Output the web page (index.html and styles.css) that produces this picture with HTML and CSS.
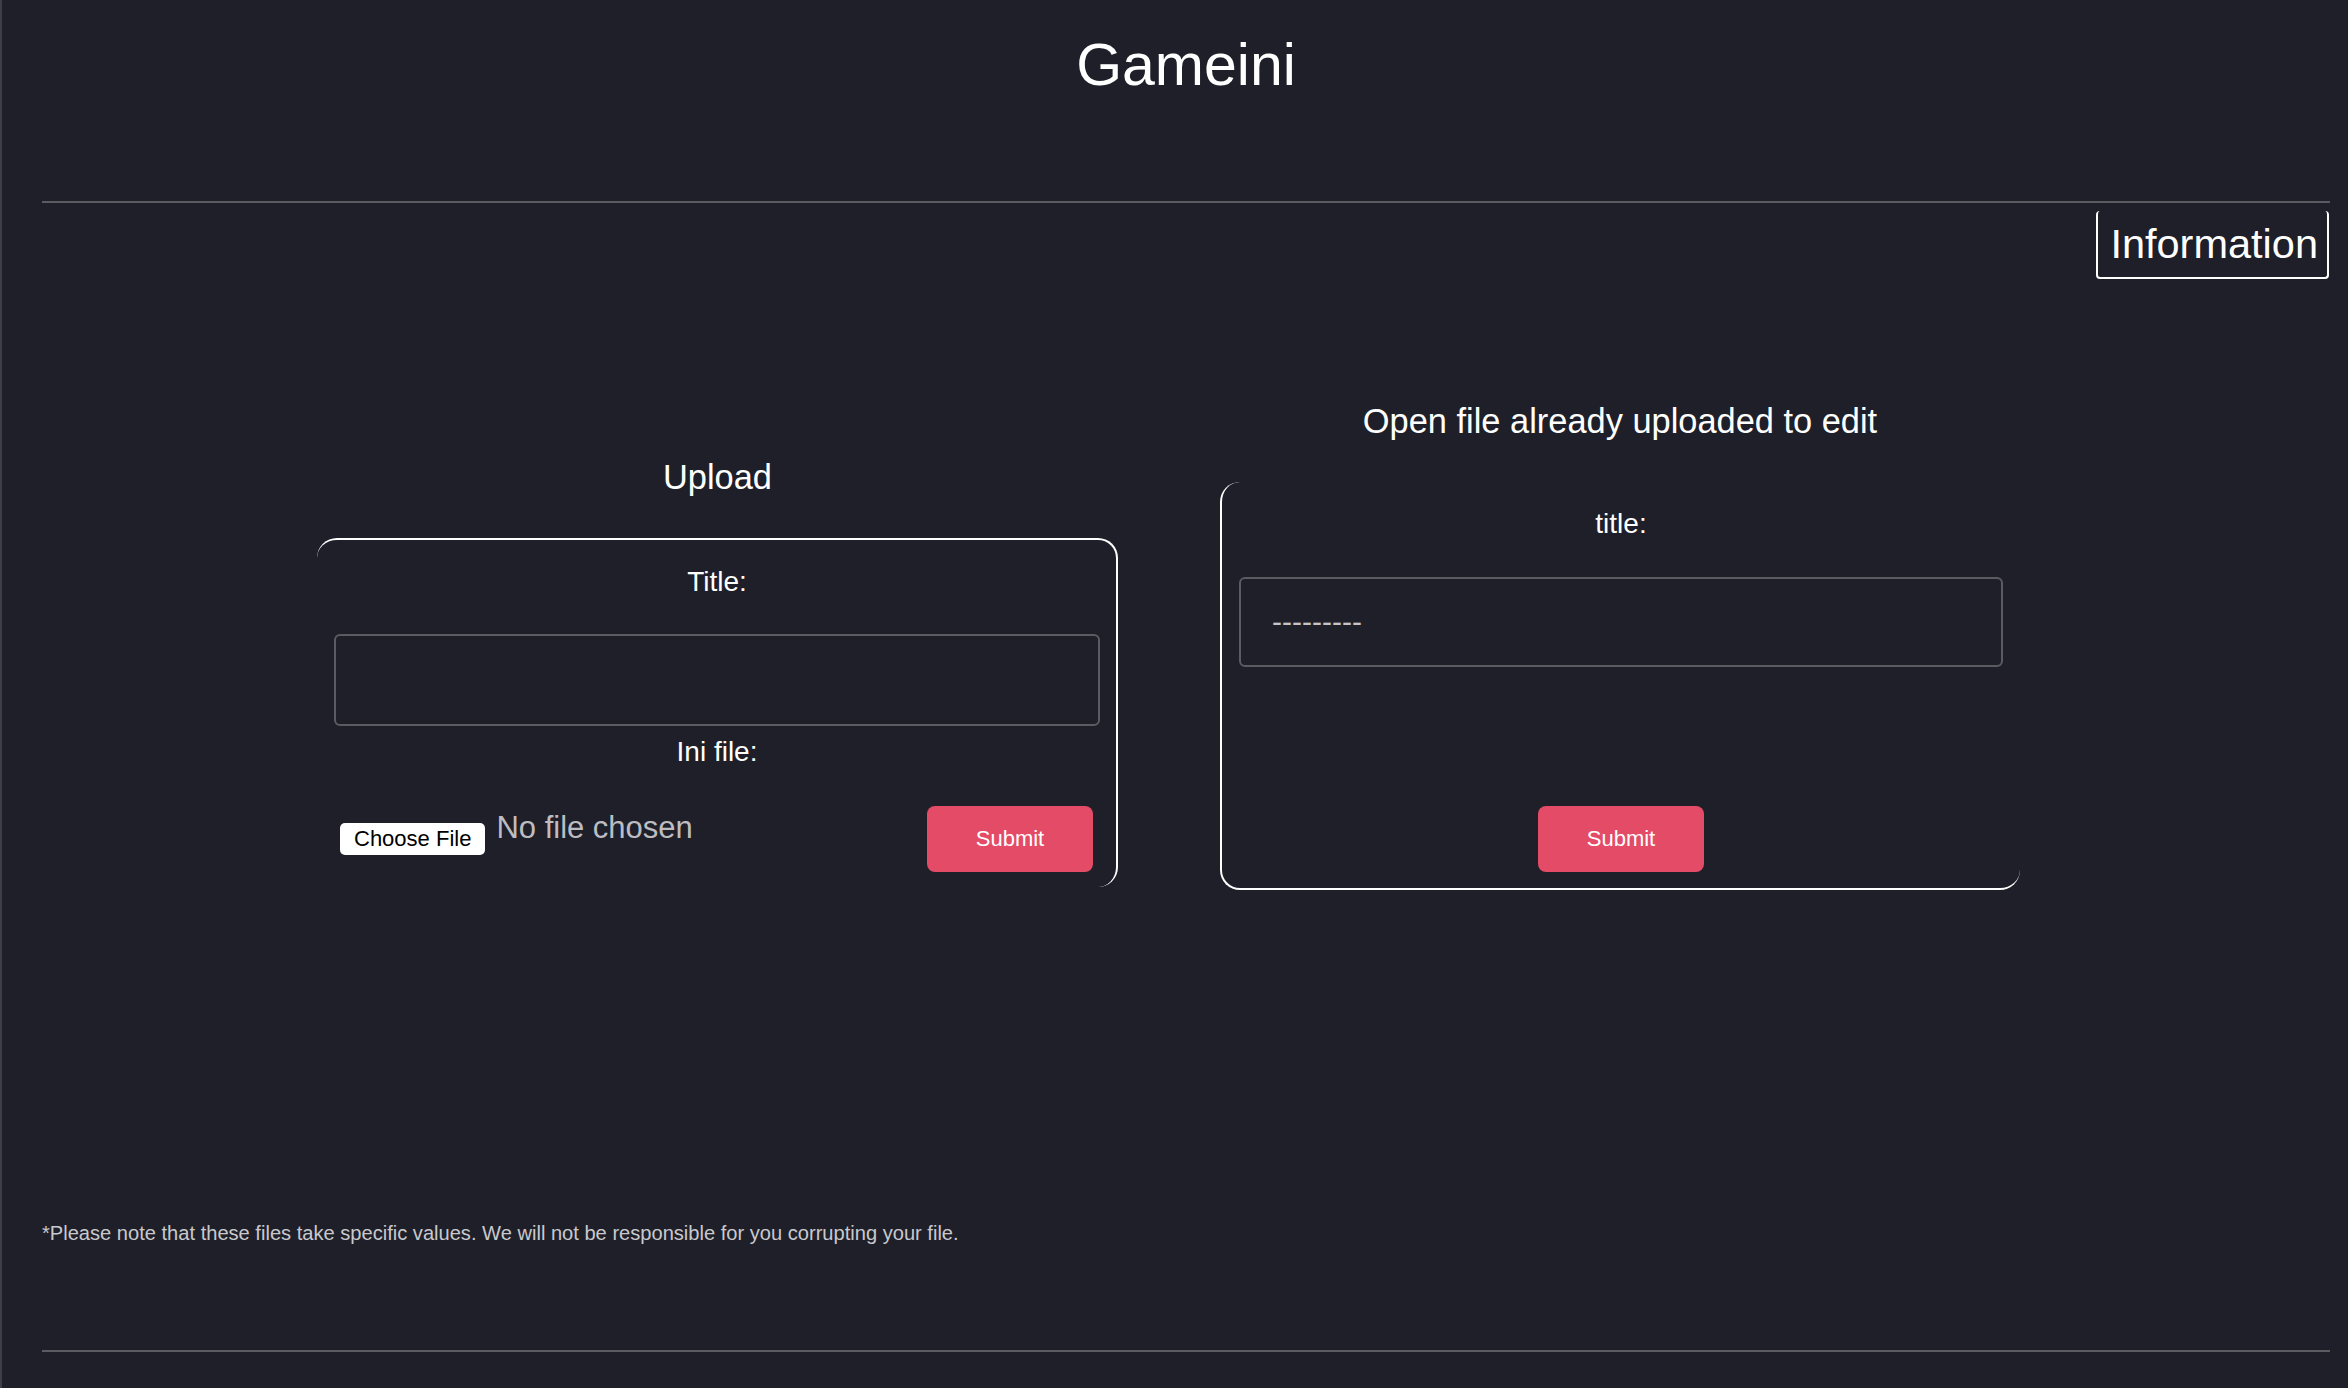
FILE: index.html
```html
<!DOCTYPE html>
<html lang="en">
<head>
<meta charset="utf-8">
<title>Gameini</title>
<link rel="stylesheet" href="styles.css">
</head>
<body>
  <header class="site-header">
    <h1 class="site-title">Gameini</h1>
  </header>
  <hr class="rule">
  <div class="toolbar">
    <button class="info-btn" type="button">Information</button>
  </div>
  <main class="panels">
    <section class="panel panel-upload">
      <h2 class="panel-title">Upload</h2>
      <form class="card card-upload">
        <label class="field-label" for="title">Title:</label>
        <input class="text-input" id="title" type="text">
        <label class="field-label label-ini">Ini file:</label>
        <div class="file-row">
          <div class="file-group">
            <label class="file-btn">Choose File<input class="file-hidden" type="file"></label>
            <span class="file-name">No file chosen</span>
          </div>
          <button class="submit-btn" type="submit">Submit</button>
        </div>
      </form>
    </section>
    <section class="panel panel-open">
      <h2 class="panel-title">Open file already uploaded to edit</h2>
      <form class="card card-open">
        <label class="field-label" for="open-title">title:</label>
        <input class="text-input input-open" id="open-title" type="text" placeholder="---------">
        <button class="submit-btn submit-center" type="submit">Submit</button>
      </form>
    </section>
  </main>
  <p class="note">*Please note that these files take specific values. We will not be responsible for you corrupting your file.</p>
  <hr class="rule rule-bottom">
</body>
</html>
```

FILE: styles.css
```css
html, body {
  margin: 0;
}

body {
  background: #1e1f29;
  color: #ffffff;
  font-family: "Liberation Sans", Arial, Helvetica, sans-serif;
  border-left: 2px solid #3e3e47;
  padding: 0 18px 0 40px;
  min-height: 1388px;
  box-sizing: border-box;
}

.site-title {
  margin: 30px 0 0;
  font-size: 59px;
  line-height: 70px;
  font-weight: 400;
  text-align: center;
}

.rule {
  border: 0;
  height: 2px;
  background: #5b5b62;
  margin: 101px 0 0;
}

.toolbar {
  display: flex;
  justify-content: flex-end;
  margin-top: 8px;
}

.info-btn {
  background: none;
  color: #ffffff;
  font-family: inherit;
  font-size: 41.5px;
  line-height: 66px;
  padding: 0 9px 0 12px;
  border: 2px solid #ffffff;
  border-top: none;
  border-radius: 4px;
  margin-right: 1px;
}

.panels {
  display: flex;
  align-items: flex-end;
  gap: 102px;
  margin-top: 122px;
  padding-left: 275px;
}

.panel-upload {
  width: 801px;
  margin-bottom: 3px;
}

.panel-open {
  width: 800px;
}

.panel-title {
  margin: 0 0 41px;
  font-size: 34.4px;
  line-height: 40px;
  font-weight: 400;
  text-align: center;
}

.card {
  box-sizing: border-box;
  border-radius: 20px;
}

.card-upload {
  border-top: 2px solid #ffffff;
  border-right: 2px solid #ffffff;
  padding: 26px 16px 15px 17px;
}

.card-open {
  border-left: 2px solid #ffffff;
  border-bottom: 2px solid #ffffff;
  padding: 26px 17px 16px 17px;
}

.field-label {
  display: block;
  font-size: 28px;
  line-height: 32px;
  text-align: center;
  margin-bottom: 36px;
}

.card-open .field-label {
  margin-bottom: 37px;
}

.text-input {
  display: block;
  width: 100%;
  height: 92px;
  box-sizing: border-box;
  border: 2px solid #5b5b62;
  border-radius: 6px;
  background: transparent;
  color: #dddddd;
  font-family: inherit;
  font-size: 30px;
  padding: 0 31px;
  outline: none;
}

.text-input::placeholder {
  color: #c4c4c8;
}

.input-open {
  height: 90px;
  margin-bottom: 139px;
}

.label-ini {
  margin-top: 10px;
  margin-bottom: 38px;
}

.file-row {
  display: flex;
  justify-content: space-between;
  align-items: center;
  padding: 0 7px 0 6px;
}

.file-group {
  display: flex;
  align-items: center;
}

.file-btn {
  display: inline-block;
  height: 32px;
  line-height: 32px;
  padding: 0 14px;
  background: #ffffff;
  color: #000000;
  font-size: 22px;
  border-radius: 5px;
}

.file-hidden {
  display: none;
}

.file-name {
  margin-left: 11px;
  margin-bottom: 22px;
  font-size: 31px;
  line-height: 34px;
  color: #bdbdc1;
}

.submit-btn {
  width: 166px;
  height: 66px;
  background: #e34b66;
  color: #ffffff;
  border: none;
  border-radius: 8px;
  font-family: inherit;
  font-size: 22px;
}

.submit-center {
  display: block;
  margin: 0 auto;
}

.note {
  margin: 332px 0 0;
  font-size: 20.1px;
  line-height: 23px;
  color: #c9c9cd;
}

.rule-bottom {
  margin-top: 105px;
}
```
